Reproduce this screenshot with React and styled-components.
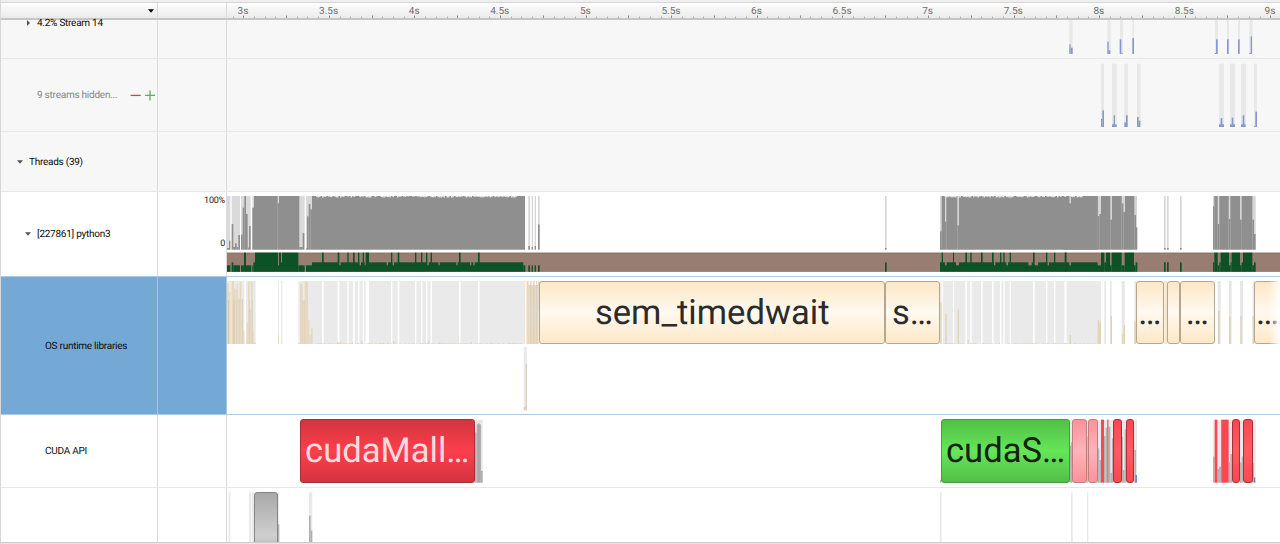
import React from 'react';
import styled, { createGlobalStyle } from 'styled-components';

const GlobalStyle = createGlobalStyle`
  body {
    margin: 0;
    background: #fff;
    font-family: Roboto, "Liberation Sans", sans-serif;
    text-rendering: geometricPrecision;
    overflow: hidden;
  }
`;

const Window = styled.div`
  box-sizing: border-box;
  width: 1280px;
  height: 544px;
  display: flex;
  flex-direction: column;
  border-left: 1px solid #d8d8d8;
  overflow: hidden;
`;

const TopStrip = styled.div`
  height: 2px;
  flex: none;
  background: #efefef;
`;

const Columns = styled.div`
  box-sizing: border-box;
  flex: none;
  display: grid;
  grid-template-columns: 157px 69px 1053px;
  height: ${(props) => props.height}px;
`;

const Header = styled(Columns)`
  border-top: 1px solid #d6d6d6;
  border-bottom: 2px solid #c6c6c6;
  background: linear-gradient(#fdfdfd, #ebebeb);
`;

const Row = styled(Columns)`
  border-bottom: 1px solid ${(props) => props.line || '#e7e7e7'};
  background: ${(props) => (props.muted ? '#f7f7f7' : '#fff')};
`;

const Cell = styled.div`
  box-sizing: border-box;
  min-width: 0;
  min-height: 0;
  border-right: 1px solid ${(props) => (props.selected ? '#a9c8e0' : '#dadada')};
  background: ${(props) => (props.selected ? '#75a9d5' : 'transparent')};
  display: flex;
  align-items: center;
`;

const HeaderCell = styled(Cell)`
  justify-content: flex-end;
  padding-right: 3.5px;
  padding-top: 1px;
`;

const LabelCell = styled(Cell)`
  height: 100%;
  padding-left: ${(props) => props.indent}px;
  padding-bottom: ${(props) => props.lift || 0}px;
`;

const Label = styled.span`
  font-size: 10px;
  letter-spacing: ${(props) => (props.faded ? '-0.24px' : '-0.26px')};
  line-height: 12px;
  padding-top: 2px;
  white-space: nowrap;
  color: ${(props) => (props.faded ? '#858585' : '#0c0c0c')};
  width: ${(props) => (props.faded ? '93px' : 'auto')};
`;

const Arrow = styled.svg`
  flex: none;
  width: 6px;
  height: 6px;
  margin-right: ${(props) => props.gap}px;
`;

const PlusMinus = styled.svg`
  flex: none;
  width: 26px;
  height: 12px;
`;

const AxisCell = styled(Cell)`
  flex-direction: column;
  justify-content: space-between;
  align-items: flex-end;
  padding: 3px 1px 26px 0;
  font-size: 9px;
  letter-spacing: -0.2px;
  line-height: 12px;
  color: #222;
`;

const Lane = styled.div`
  position: relative;
  min-width: 0;
  overflow: hidden;
`;

const Chart = styled.svg`
  display: block;
  width: 1053px;
  height: ${(props) => props.h}px;
`;

const palettes = {
  cream: ['#fde8c6', '#fff9f0', '#b3a78f', '#2b2b2b'],
  red: ['#d3343f', '#fb3f4b', '#a3303a', '#ffd9dc'],
  crimson: ['#fb4852', '#ff5a62', '#ab2f38', '#fff'],
  pink: ['#fb9299', '#ffb4b9', '#bd7f84', '#fff'],
  green: ['#52bf48', '#66e659', '#469c3e', '#13240f'],
  gray: ['#a8a8a8', '#d0d0d0', '#868686', '#222'],
};

// Events sit on the time scale, so their place is given by start and end.
const Event = styled.div`
  box-sizing: border-box;
  position: absolute;
  left: ${(props) => props.start - 227}px;
  top: ${(props) => props.top}px;
  width: ${(props) => props.end - props.start}px;
  height: ${(props) => props.h || 63.4}px;
  border: 1px solid ${(props) => palettes[props.tone][2]};
  border-radius: 3px;
  background: linear-gradient(
    ${(props) => palettes[props.tone][0]},
    ${(props) => palettes[props.tone][1]} ${(props) => (props.tone === 'gray' ? 70 : 50)}%,
    ${(props) => palettes[props.tone][0]}
  );
  color: ${(props) => palettes[props.tone][3]};
  font-size: 34.6px;
  line-height: 63px;
  text-align: center;
  white-space: nowrap;
  overflow: hidden;
`;

const FadeOut = styled.div`
  position: absolute;
  right: 0;
  top: 0;
  width: 11px;
  height: 70px;
  background: linear-gradient(90deg, rgba(255, 255, 255, 0), #fff);
`;

const BottomEdge = styled.div`
  flex: none;
  height: 2px;
  background: linear-gradient(#cdcdcd 50%, #e6e6e6 50%);
`;

const TickLabel = styled.text`
  font-size: 10px;
  fill: #6f6f6f;
  text-anchor: middle;
`;

const ORIGIN = 227;

// Each bin is [left, right, top] in thirds of a pixel, counted from `at`.
function Bins({ at, base, top, fill, data }) {
  return (
    <g transform={`translate(${at[0]} ${at[1]}) scale(0.33333)`} fill={fill}>
      {data.map(([a, b, t = top], i) => (
        <rect key={i} x={a} y={t} width={b - a} height={base - t} />
      ))}
    </g>
  );
}

function Plot({ y, h, children }) {
  return (
    <Chart h={h} viewBox={`${ORIGIN} ${y} 1053 ${h}`}>
      {children}
    </Chart>
  );
}

function Ruler() {
  const step = 85.58;
  const ticks = [];
  for (let i = -1; i < 97; i++) {
    const x = 243.3 + (i * step) / 8;
    ticks.push(
      <rect
        key={i}
        x={Math.round(x)}
        y={i % 4 === 0 ? 15.5 : 16.6}
        width={1}
        height={i % 4 === 0 ? 2.5 : 1.4}
        fill={i % 4 === 0 ? '#8a8a8a' : '#a8a8a8'}
      />
    );
  }
  const labels = ['3s', '3.5s', '4s', '4.5s', '5s', '5.5s', '6s', '6.5s', '7s', '7.5s', '8s', '8.5s', '9s'];
  return (
    <Plot y={3} h={15}>
      {ticks}
      {labels.map((text, i) => (
        <TickLabel key={text} x={243 + i * step} y={13.8}>
          {text}
        </TickLabel>
      ))}
    </Plot>
  );
}

const BLUE = '#8898cc';

const streamShade = [[88, 98], [202, 212], [240, 249], [277, 282], [525, 534], [561, 567], [594, 600], [628, 638]];
const streamBars = [
  [88, 92, 133], [92, 98, 143], [202, 206, 125], [206, 211, 151], [239, 244, 118], [244, 248, 159],
  [277, 282, 114], [524, 528, 159], [528, 533, 118], [561, 566, 118], [594, 599, 118], [628, 632, 159], [632, 636, 109],
];

const hiddenShade = [[183, 192], [216, 230], [253, 264], [291, 302], [537, 552], [570, 585], [603, 618], [642, 651]];
const hiddenBars = [
  [183, 187, 357], [187, 192, 331], [216, 230, 373], [221, 225, 346], [253, 258, 367], [258, 263, 346],
  [291, 296, 351], [296, 301, 362], [537, 552, 373], [542, 547, 354], [570, 585, 373], [575, 580, 353],
  [603, 617, 373], [608, 613, 346], [642, 646, 378], [646, 651, 335],
];

const LEFT = [190, 185];
const MID = [430, 185];
const RIGHT = [860, 185];
const END = [1060, 185];

const cpuLeft = [
  [111, 117, 189], [117, 121, 167], [125, 130, 117], [130, 135, 186], [135, 140, 175], [140, 145, 186],
  [145, 150, 150], [153, 158, 149], [158, 163, 68], [163, 168], [168, 173, 87], [173, 177, 188], [177, 182, 123],
  [187, 192, 68], [192, 263], [263, 267, 55], [267, 328], [328, 338, 186], [338, 343, 144], [348, 351, 190],
  [351, 356, 94], [356, 361, 57], [361, 366, 73], [366, 1005],
];
const cpuRight = [
  [240, 245, 139], [245, 255], [255, 259, 110], [259, 292], [292, 297, 121], [297, 628], [628, 633, 55], [633, 713],
];
const cpuEnd = [
  [113, 118, 93], [118, 123, 87], [123, 151], [151, 156, 104], [156, 185], [185, 190, 55], [190, 195, 81],
  [195, 223], [223, 228, 90], [228, 232, 127], [312, 317, 189], [321, 326, 189], [360, 365, 189],
  [459, 463, 64], [463, 473], [473, 478, 117], [478, 506], [506, 511, 102], [511, 540], [540, 545, 104],
  [545, 577], [577, 582, 104], [582, 587, 147],
];

const greenLeft = [
  [111, 121, 241], [121, 125, 262], [125, 130, 232], [130, 150, 241], [153, 162, 241], [162, 168], [168, 184, 241],
  [187, 190, 241], [190, 195, 232], [195, 264], [264, 267, 241], [267, 273], [273, 276, 232], [276, 325],
  [325, 344, 241], [348, 366, 241], [366, 1000, 232], [1000, 1006, 241],
];
const spikesLeft = [
  [396, 401], [443, 448], [472, 476], [489, 494], [504, 508], [518, 522], [527, 537], [603, 607], [623, 628],
  [675, 679], [693, 697], [708, 712], [722, 726], [807, 812], [864, 869],
];
const dipsLeft = [[448, 452], [509, 513], [524, 527], [590, 594], [608, 612], [712, 716], [745, 749], [799, 803], [840, 844], [850, 854]];
const spikesRight = [
  [245, 249], [279, 282], [316, 321], [331, 335], [363, 368], [396, 401], [420, 424], [430, 434], [449, 453],
  [519, 524], [558, 562], [582, 586], [614, 619],
];
const dipsRight = [[255, 260], [288, 297], [402, 406], [439, 444], [505, 515], [524, 534], [563, 567], [628, 633], [713, 723]];
const greenEnd = [
  [123, 133], [133, 138, 232], [138, 150], [150, 155, 241], [155, 185], [185, 194, 241], [194, 222],
  [222, 227, 241], [227, 232, 232], [312, 317, 232], [321, 326, 232], [360, 365, 232], [459, 463, 232],
  [463, 473], [473, 478, 241], [478, 482, 232], [482, 507], [507, 512, 241], [512, 515, 232], [515, 540],
  [540, 545, 241], [545, 549, 232], [549, 577], [577, 582, 241], [582, 587, 232],
];

const osLeft = [
  [111, 116, 294], [116, 121, 321], [125, 132, 288], [132, 136, 310], [136, 140, 312], [140, 144, 297],
  [144, 149, 340], [149, 154, 290], [154, 159, 342], [159, 163, 437], [168, 170, 470], [170, 174, 413],
  [174, 179, 290], [179, 183, 372], [183, 188, 290], [188, 191, 437], [191, 197, 473], [264, 267, 450],
  [274, 277, 475], [325, 330, 474], [330, 338, 297], [338, 344, 347], [344, 351, 290], [351, 354, 292],
  [354, 358, 404], [358, 363, 450], [363, 368, 430],
];
// The seams between neighbouring calls in the dense part.
const osSeams = [[115, 117], [131, 133], [140, 141], [149, 150], [157, 158], [178, 179], [186, 187], [337, 338], [343, 344]];
const osRight = [[241, 245, 351], [256, 260, 387], [293, 297, 374], [323, 326, 465], [629, 633, 450]];
const osEnd = [
  [113, 118, 405], [118, 123, 413], [152, 156, 393], [186, 190, 447], [191, 195, 420], [223, 228, 410],
  [474, 479, 378], [507, 512, 395], [541, 545, 393], [578, 583, 393],
];

// Short noise along an edge, the same on every render.
function noise(from, to, seed) {
  const out = [];
  for (let x = from; x < to; x += 1.5) {
    const n = Math.abs(Math.sin(x * 12.9898 + seed) * 43758.5453) % 1;
    if (n > 0.3) out.push([x, n]);
  }
  return out;
}

function CpuChart() {
  return (
    <Plot y={192} h={84}>
      <Bins at={LEFT} base={194} top={33} fill="#dadada" data={[[111, 121], [125, 150], [153, 182], [187, 344], [348, 1005]]} />
      <Bins at={MID} base={194} top={33} fill="#d6d6d6" data={[[295, 300], [305, 309], [314, 318], [324, 329]]} />
      <Bins at={RIGHT} base={194} top={33} fill="#d6d6d6" data={[[75, 80], [240, 831]]} />
      <Bins at={END} base={194} top={33} fill="#d6d6d6" data={[[312, 317], [321, 326], [360, 365], [459, 587]]} />
      <Bins at={LEFT} base={194} top={33} fill="#8f8f8f" data={cpuLeft} />
      <Bins at={MID} base={194} top={33} fill="#8f8f8f" data={[[295, 300, 183], [305, 309, 186], [314, 318, 183], [324, 329, 119]]} />
      <Bins at={RIGHT} base={194} top={33} fill="#8f8f8f" data={[[75, 80, 189], ...cpuRight]} />
      <Bins at={END} base={194} top={33} fill="#8f8f8f" data={[[10, 113], ...cpuEnd]} />
      {[...noise(316, 516, 1), ...noise(943, 1082, 2)].map(([x, n]) => (
        <rect key={x} x={x} y={196} width={1.5} height={n * 1.6} fill="#e6e6e6" />
      ))}
      <rect x={1069.4} y={196} width={1.5} height={7.3} fill="#d6d6d6" />
      <rect x={227} y={252.6} width={1053} height={19} fill="#987e70" />
      <g>
        <Bins at={LEFT} base={260} top={203} fill="#0c5226" data={greenLeft} />
        <Bins at={LEFT} base={241} top={203} fill="#0c5226" data={spikesLeft} />
        <Bins at={LEFT} base={241} top={231} fill="#987e70" data={dipsLeft} />
        <Bins at={MID} base={260} top={241} fill="#0c5226" data={[[295, 300], [305, 309], [314, 318], [324, 329]]} />
        <Bins at={RIGHT} base={260} top={232} fill="#0c5226" data={[[75, 80], [240, 723]]} />
        <Bins at={RIGHT} base={241} top={203} fill="#0c5226" data={spikesRight} />
        <Bins at={RIGHT} base={241} top={231} fill="#987e70" data={dipsRight} />
        <Bins at={END} base={260} top={203} fill="#0c5226" data={[[15, 19], ...greenEnd]} />
      </g>
      <rect x={227} y={252.6} width={1053} height={0.8} fill="rgba(0,0,0,0.15)" />
      <rect x={227} y={271} width={1053} height={0.7} fill="rgba(0,0,0,0.3)" />
    </Plot>
  );
}

function OsChart() {
  return (
    <Plot y={277} h={137}>
      <defs>
        <linearGradient id="tan" x1="0" y1="281" x2="0" y2="344" gradientUnits="userSpaceOnUse">
          <stop offset="0" stopColor="#e8d8bd" />
          <stop offset="0.5" stopColor="#e5dccf" />
          <stop offset="1" stopColor="#ead9bd" />
        </linearGradient>
      </defs>
      <Bins
        at={LEFT}
        base={477}
        top={288}
        fill="#eaeaea"
        data={[[111, 163], [168, 197], [264, 267], [273, 277], [325, 1005]]}
      />
      <Bins at={LEFT} base={477} top={288} fill="#fff" data={spikesLeft} />
      <Bins at={LEFT} base={477} top={288} fill="#feeacb" data={[[121, 125], [1007, 1011]]} />
      <Bins at={RIGHT} base={477} top={288} fill="#eaeaea" data={[[240, 723]]} />
      <Bins at={RIGHT} base={477} top={288} fill="#fff" data={spikesRight} />
      <Bins
        at={END}
        base={477}
        top={288}
        fill="#e7e7e7"
        data={[[133, 138], [150, 155], [185, 194], [223, 229], [473, 482], [507, 515], [540, 549], [578, 583]]}
      />
      <Bins at={END} base={477} top={288} fill="#fff" data={[[14, 19]]} />
      <Bins at={END} base={477} top={288} fill="#f9e7cb" data={[[313, 321]]} />
      {[...noise(314, 523, 3), ...noise(943, 1098, 4)].map(([x, n]) => (
        <rect key={x} x={x} y={344 - n * 1.1} width={1.5} height={n * 1.1} fill="#e6d8bf" />
      ))}
      {[[337, 2], [340, 2.6], [361, 3.2], [387, 1.8], [393, 3], [428, 2.6], [439, 2], [470, 2]].map(([x, h]) => (
        <rect key={x} x={x} y={344 - h} width={1.5} height={h} fill="#e3d4b8" />
      ))}
      <Bins at={LEFT} base={477} fill="#e6d8c1" data={osLeft} />
      <Bins at={LEFT} base={477} top={345} fill="#d3c3a8" data={osSeams} />
      <Bins at={RIGHT} base={477} fill="#e0d2b9" data={osRight} />
      <Bins at={END} base={477} fill="#e0d2b9" data={osEnd} />
      <rect x={527} y={281} width={11.7} height={63} fill="url(#tan)" />
      {[529, 532, 535, 537.6].map((x) => (
        <rect key={x} x={x - 0.3} y={281} width={1.2} height={4} fill="#fff" />
      ))}
      {[530.4, 533.4, 536.4].map((x) => (
        <rect key={x} x={x} y={285} width={0.8} height={59} fill="#d8cbb7" />
      ))}
      <rect x={538} y={281} width={1.8} height={29} fill="#ddd" />
      <rect x={523.7} y={347} width={3.3} height={63.3} fill="#eaeaea" />
      <rect x={525.7} y={363.7} width={1.3} height={46.6} fill="#ddcfb8" />
      <rect x={523.7} y={407} width={2} height={3.3} fill="#ddcfb8" />
    </Plot>
  );
}

const CUDA_LEFT = [200, 400];
const CUDA = [920, 400];

function CudaChart() {
  return (
    <Plot y={415} h={72}>
      <Bins at={CUDA_LEFT} base={248} top={59} fill="#e7e7e7" data={[[824, 848]]} />
      <Bins at={CUDA_LEFT} base={248} fill="#b0b0b0" data={[[824, 830, 97], [830, 843, 73], [843, 848, 213]]} />
      <Bins at={CUDA_LEFT} base={248} fill="#a6a6a6" data={[[834, 838, 70]]} />
      <Bins at={CUDA} base={248} top={59} fill="#e9e9e9" data={[[449, 651], [879, 1007]]} />
      <Bins
        at={CUDA}
        base={248}
        fill="#b4b4b4"
        data={[
          [60, 64, 239], [449, 453, 137], [453, 457, 127], [500, 504, 110], [534, 538, 145], [538, 543, 180],
          [552, 557, 108], [557, 562, 83], [565, 571, 80], [571, 576, 218], [576, 580, 115], [605, 609, 110],
          [609, 614, 210], [614, 618, 88], [643, 648, 150], [879, 884, 170], [892, 897, 207], [897, 903, 200],
          [926, 931, 187], [931, 936, 162], [960, 965, 187], [965, 969, 170], [997, 1002, 190],
        ]}
      />
      <Bins at={CUDA} base={248} fill="#e9c98f" data={[[501, 503, 110]]} />
      <Bins at={CUDA} base={248} top={59} fill="#fb4751" data={[[543, 552], [884, 892], [906, 926]]} />
      <Bins at={CUDA} base={248} top={59} fill="#dd7d83" data={[[561, 566]]} />
      <Bins at={CUDA} base={248} top={59} fill="#8796c6" data={[[903, 906]]} />
      <Bins at={CUDA} base={248} fill="#6f8ad0" data={[[646, 651, 225], [1002, 1006, 232]]} />
    </Plot>
  );
}

function ExtraChart() {
  return (
    <Plot y={488} h={54}>
      <Bins at={CUDA_LEFT} base={430} top={277} fill="#e9e9e9" data={[[86, 91], [147, 153], [155, 162], [232, 237], [327, 337]]} />
      <Bins at={CUDA_LEFT} base={430} fill="#b0b0b0" data={[[234, 238, 373], [327, 332, 347], [332, 337, 392]]} />
      <Bins at={CUDA} base={430} top={277} fill="#e9e9e9" data={[[60, 65], [453, 458], [501, 505]]} />
    </Plot>
  );
}

function DownArrow({ gap = 0, color = '#555' }) {
  return (
    <Arrow gap={gap} viewBox="0 0 6 6">
      <path d="M0 1.3h6L3 4.7z" fill={color} />
    </Arrow>
  );
}

function App() {
  return (
    <>
      <GlobalStyle />
      <Window>
        <TopStrip />
        <Header height={18}>
          <HeaderCell>
            <DownArrow color="#000" />
          </HeaderCell>
          <Cell />
          <Ruler />
        </Header>

        <Row height={39} muted>
          <LabelCell indent={24} lift={32}>
            <Arrow gap={6} viewBox="0 0 6 6">
              <path d="M2 0v6L5 3z" fill="#555" />
            </Arrow>
            <Label>4.2% Stream 14</Label>
          </LabelCell>
          <Cell />
          <Plot y={20} h={38}>
            <Bins at={[1040, 0]} base={162} top={60} fill="#e8e8e8" data={streamShade} />
            <Bins at={[1040, 0]} base={162} fill={BLUE} data={streamBars} />
          </Plot>
        </Row>

        <Row height={73} muted>
          <LabelCell indent={36}>
            <Label faded>9 streams hidden...</Label>
            <PlusMinus viewBox="0 0 26 12">
              <path d="M0.7 6.4h10" stroke="#d94040" strokeWidth="1.3" />
              <path d="M15 6.4h10M20 1.4v10" stroke="#55b555" strokeWidth="1.3" />
            </PlusMinus>
          </LabelCell>
          <Cell />
          <Plot y={59} h={72}>
            <Bins at={[1040, 0]} base={381} top={191} fill="#e8e8e8" data={hiddenShade} />
            <Bins at={[1040, 0]} base={381} fill={BLUE} data={hiddenBars} />
          </Plot>
        </Row>

        <Row height={60} muted>
          <LabelCell indent={16}>
            <DownArrow gap={6} />
            <Label>Threads (39)</Label>
          </LabelCell>
          <Cell />
          <Lane />
        </Row>

        <Row height={85} line="#b0cadf">
          <LabelCell indent={24}>
            <DownArrow gap={6} />
            <Label>[227861] python3</Label>
          </LabelCell>
          <AxisCell>
            <span>100%</span>
            <span>0</span>
          </AxisCell>
          <Lane>
            <CpuChart />
          </Lane>
        </Row>

        <Row height={138} line="#b0cadf">
          <LabelCell indent={44} selected>
            <Label>OS runtime libraries</Label>
          </LabelCell>
          <Cell selected />
          <Lane>
            <OsChart />
            <Event tone="cream" top={4} start={539.4} end={885}>sem_timedwait</Event>
            <Event tone="cream" top={4} start={885} end={940}>s…</Event>
            <Event tone="cream" top={4} start={1135.7} end={1164}>…</Event>
            <Event tone="cream" top={4} start={1167} end={1180} />
            <Event tone="cream" top={4} start={1180} end={1214.6}>…</Event>
            <Event tone="cream" top={4} start={1254} end={1281}>…</Event>
            <FadeOut />
          </Lane>
        </Row>

        <Row height={73}>
          <LabelCell indent={44}>
            <Label>CUDA API</Label>
          </LabelCell>
          <Cell />
          <Lane>
            <CudaChart />
            <Event tone="red" top={4.4} start={299.6} end={475}>cudaMall…</Event>
            <Event tone="green" top={4.4} start={941.4} end={1069.8}>cudaS…</Event>
            <Event tone="pink" top={4.4} start={1072.2} end={1087} />
            <Event tone="pink" top={4.4} start={1088} end={1098.2} />
            <Event tone="crimson" top={4.4} start={1113.3} end={1121.8} />
            <Event tone="crimson" top={4.4} start={1126} end={1134.4} />
            <Event tone="crimson" top={4.4} start={1231.7} end={1240.2} />
            <Event tone="crimson" top={4.4} start={1243} end={1252.6} />
          </Lane>
        </Row>

        <Columns height={54}>
          <Cell />
          <Cell />
          <Lane>
            <ExtraChart />
            <Event tone="gray" top={4} start={254} end={278} />
          </Lane>
        </Columns>
        <BottomEdge />
      </Window>
    </>
  );
}

export default App;
